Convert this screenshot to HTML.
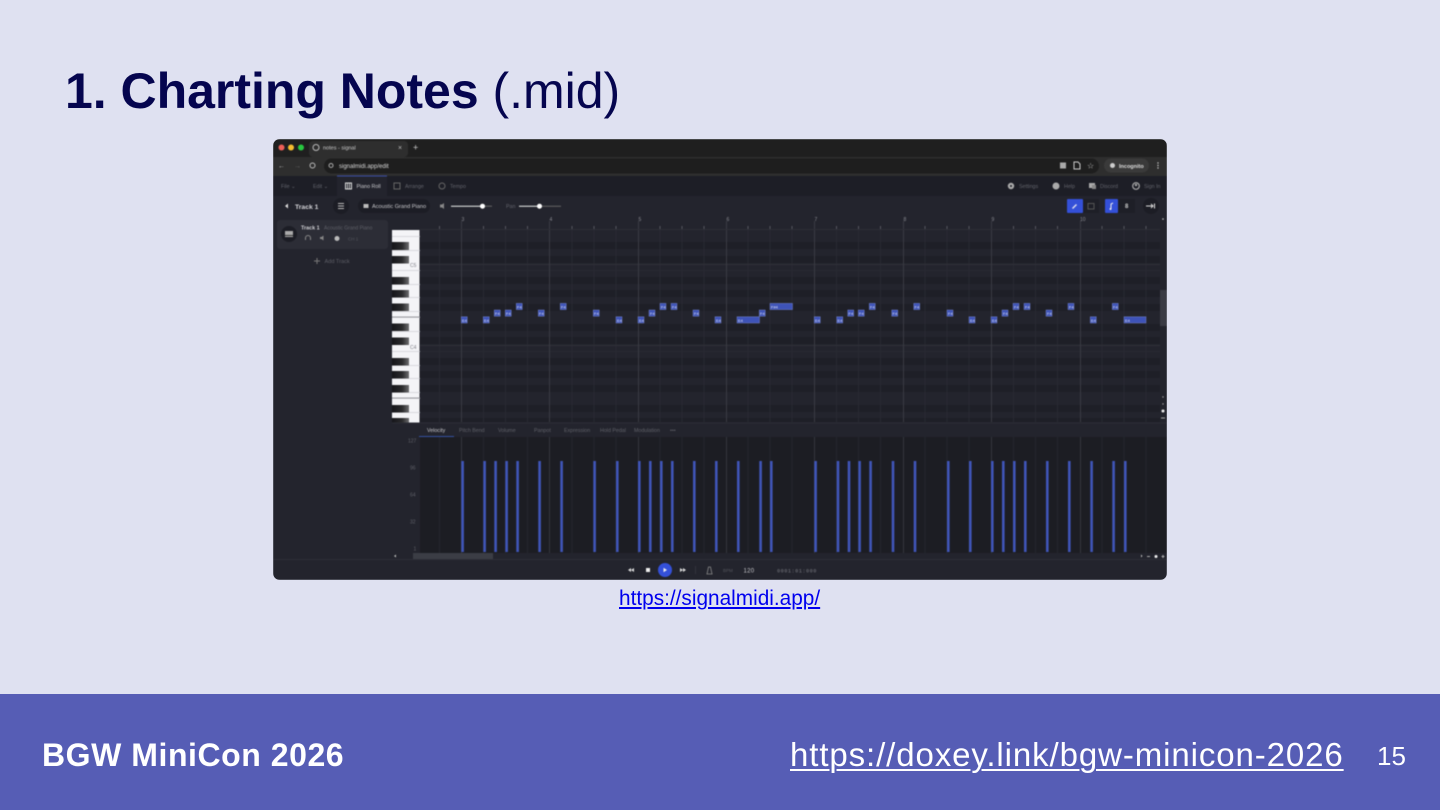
<!DOCTYPE html>
<html><head><meta charset="utf-8"><title>Charting Notes</title>
<style>
html,body{margin:0;padding:0;width:1440px;height:810px;overflow:hidden;background:#dfe1f1;font-family:"Liberation Sans",sans-serif}
.a{position:absolute;white-space:nowrap}
#shot{position:absolute;left:273px;top:139px;width:894px;height:441px;border-radius:7px;overflow:hidden}
#shot svg{display:block;filter:blur(.5px)}
text{font-family:"Liberation Sans",sans-serif}
</style></head><body>
<div class="a" style="left:65px;top:62px;font-size:50px;line-height:58px;color:#05054f;letter-spacing:-.02px"><b>1. Charting Notes</b> (.mid)</div>
<div id="shot">
<svg width="894" height="441" viewBox="273 139 894 441" xmlns="http://www.w3.org/2000/svg">
<rect x="273" y="139" width="894" height="441" fill="#23242d"/>
<!-- tab strip -->
<rect x="273" y="139" width="894" height="18" fill="#1f1f1f"/>
<rect x="309" y="141" width="99" height="16" rx="4" fill="#2e2e2e"/>
<circle cx="281.500" cy="147.500" r="3" fill="#ed5f57"/><circle cx="291" cy="147.500" r="3" fill="#f5bd2f"/><circle cx="301" cy="147.500" r="3" fill="#28c840"/>
<circle cx="316" cy="147.500" r="3" fill="none" stroke="#bbb" stroke-width="1"/>
<text x="323" y="149.500" font-size="5.500" fill="#c8c8c8">notes - signal</text>
<text x="398" y="150" font-size="7" fill="#bbb">×</text>
<text x="413" y="150.500" font-size="9" fill="#ccc">+</text>
<!-- address row -->
<rect x="273" y="157" width="894" height="19" fill="#2e2e2e"/>
<rect x="324" y="158.500" width="775" height="15" rx="7.500" fill="#1e1e1e"/>
<text x="278" y="168" font-size="7" fill="#bbb">←</text><text x="294" y="168" font-size="7" fill="#666">→</text>
<circle cx="312.500" cy="165.500" r="2.500" fill="none" stroke="#bbb" stroke-width="1"/>
<circle cx="331" cy="165.500" r="2" fill="none" stroke="#aaa" stroke-width="1"/>
<text x="339" y="168" font-size="6" fill="#d8d8d8">signalmidi.app/edit</text>
<rect x="1060" y="162.500" width="6" height="6" fill="#aaa"/>
<path d="M1074 162h4l2 2v5h-6z" fill="none" stroke="#ccc"/>
<text x="1087" y="168.500" font-size="8" fill="#ccc">☆</text>
<rect x="1104" y="158.500" width="45" height="14" rx="7" fill="#3a3a3a"/>
<circle cx="1112.500" cy="165.500" r="2.500" fill="#ccc"/>
<text x="1119" y="168" font-size="5.500" font-weight="bold" fill="#ddd">Incognito</text>
<circle cx="1158" cy="163" r=".7" fill="#ccc"/><circle cx="1158" cy="165.500" r=".7" fill="#ccc"/><circle cx="1158" cy="168" r=".7" fill="#ccc"/>
<!-- app header -->
<rect x="273" y="176" width="894" height="20" fill="#1d1e26"/>
<rect x="337" y="176" width="50" height="20" fill="#23242d"/>
<rect x="337" y="175.500" width="50" height="1" fill="#3b4fa5"/>
<g font-size="5.300" fill="#62636b">
<text x="281" y="188">File ⌄</text><text x="313" y="188">Edit ⌄</text>
<text x="405" y="188">Arrange</text><text x="450" y="188">Tempo</text>
<text x="1019" y="188">Settings</text><text x="1064" y="188">Help</text><text x="1100" y="188">Discord</text><text x="1144" y="188">Sign In</text></g>
<text x="356.500" y="188" font-size="5.300" fill="#c8c8cc">Piano Roll</text>
<rect x="345.500" y="183" width="6" height="6" fill="none" stroke="#ddd" stroke-width="1"/><path d="M347.500 183v6M349.500 183v6" stroke="#ddd" stroke-width=".8"/>
<rect x="394" y="183" width="6" height="6" fill="none" stroke="#666"/>
<circle cx="442" cy="186" r="3" fill="none" stroke="#666"/>
<circle cx="1011" cy="186" r="3.200" fill="#aaa"/><circle cx="1011" cy="186" r="1" fill="#1d1e26"/>
<circle cx="1056" cy="186" r="3.500" fill="#aaa"/>
<rect x="1089" y="183" width="6" height="5" fill="#aaa"/><rect x="1092" y="185" width="4" height="4" fill="#888"/>
<circle cx="1136" cy="186" r="3.300" fill="none" stroke="#aaa" stroke-width="1.200"/><circle cx="1136" cy="185" r="1.200" fill="#aaa"/>
<!-- toolbar -->
<path d="M288 203.500v5l-3-2.500z" fill="#ddd"/>
<text x="295" y="209" font-size="6.800" font-weight="bold" fill="#d6d6da">Track 1</text>
<circle cx="341" cy="206" r="8" fill="#1c1d25"/>
<path d="M338 203.500h6M338 206h6M338 208.500h6" stroke="#bbb" stroke-width="1"/>
<rect x="358" y="199" width="72" height="14" rx="7" fill="#1c1d25"/>
<rect x="363.500" y="204" width="5" height="4" fill="#bbb"/>
<text x="372" y="208" font-size="5.600" fill="#c8c8cc">Acoustic Grand Piano</text>
<path d="M440 204.500h2l2-1.500v6l-2-1.500h-2z" fill="#888"/>
<path d="M451 206.200h31" stroke="#eee" stroke-width="1"/><path d="M482 206.200h10" stroke="#666" stroke-width="1"/><circle cx="482.500" cy="206.200" r="2.500" fill="#fff"/>
<text x="506" y="208" font-size="5.300" fill="#62636b">Pan</text>
<path d="M519 206.200h21" stroke="#eee" stroke-width="1"/><path d="M540 206.200h21" stroke="#666" stroke-width="1"/><circle cx="539.500" cy="206.200" r="2.500" fill="#fff"/>
<rect x="1067" y="199" width="16" height="14" rx="1" fill="#3450d8"/>
<path d="M1072.500 208.500l4-4" stroke="#dde" stroke-width="1.500"/>
<rect x="1083" y="199" width="16" height="14" fill="#1e1f27"/><rect x="1088" y="203.500" width="6" height="5.500" fill="none" stroke="#555" stroke-width="1"/>
<rect x="1105" y="199" width="13" height="14" rx="1" fill="#3450d8"/>
<path d="M1111 209v-5l2-1" stroke="#eee" stroke-width="1" fill="none"/><circle cx="1110.500" cy="209" r="1" fill="#eee"/>
<rect x="1118" y="199" width="17" height="14" fill="#1e1f27"/>
<text x="1125" y="208" font-size="6" font-weight="bold" fill="#ccc">8</text>
<circle cx="1151" cy="206" r="8" fill="#1c1d25"/>
<path d="M1146 206h7M1151 204l2 2-2 2M1154.500 203.500v5" stroke="#ddd" stroke-width="1" fill="none"/>
<!-- sidebar -->
<rect x="273" y="219" width="119" height="361" fill="#23242d"/>
<rect x="277" y="220" width="111" height="29" rx="3" fill="#2c2d36"/>
<circle cx="289" cy="234" r="8" fill="#1c1d25"/>
<rect x="285" y="231" width="8" height="6" fill="#aaa"/><rect x="285" y="235" width="8" height="1" fill="#333"/>
<text x="301" y="229.500" font-size="5.400" font-weight="bold" fill="#cfcfd3">Track 1</text>
<text x="324" y="229.500" font-size="5" fill="#5e5f67">Acoustic Grand Piano</text>
<path d="M305.500 240v-2a2.500 2.500 0 0 1 5 0v2" stroke="#888" fill="none"/>
<path d="M320 237h1.500l2-1.500v5l-2-1.500H320z" fill="#888"/>
<circle cx="337" cy="238.500" r="2.500" fill="#bbb"/>
<text x="348" y="240.500" font-size="4.500" fill="#55565e">CH 1</text>
<path d="M314 261h6M317 258v6" stroke="#777" stroke-width="1"/>
<text x="324.500" y="263" font-size="5.600" fill="#5e5f67">Add Track</text>
<!-- grid -->
<rect x="392" y="215" width="775" height="208" fill="#23242d"/>
<g fill="#1e1f27">
<rect x="420" y="242" width="740" height="7"/><rect x="420" y="256" width="740" height="7"/><rect x="420" y="277" width="740" height="7"/><rect x="420" y="290" width="740" height="7"/><rect x="420" y="304" width="740" height="7"/><rect x="420" y="324" width="740" height="7"/><rect x="420" y="337" width="740" height="7"/><rect x="420" y="358" width="740" height="7"/><rect x="420" y="371" width="740" height="7"/><rect x="420" y="385" width="740" height="7"/><rect x="420" y="405" width="740" height="7"/><rect x="420" y="418" width="740" height="4"/>
</g>
<g stroke="#282932" stroke-width="1">
<path d="M420 270.500h740M420 351.500h740"/>
<path d="M439.500 230v192M483.500 230v192M505.500 230v192M527.500 230v192M572 230v192M594 230v192M616 230v192M660 230v192M682 230v192M704 230v192M748 230v192M770 230v192M792 230v192M836.500 230v192M858.500 230v192M880.500 230v192M925 230v192M947 230v192M969 230v192M1013.500 230v192M1035.500 230v192M1057.500 230v192M1102 230v192M1124 230v192M1146 230v192"/></g>
<path d="M439.500 226v3M483.500 226v3M505.500 226v3M527.500 226v3M572 226v3M594 226v3M616 226v3M660 226v3M682 226v3M704 226v3M748 226v3M770 226v3M792 226v3M836.500 226v3M858.500 226v3M880.500 226v3M925 226v3M947 226v3M969 226v3M1013.500 226v3M1035.500 226v3M1057.500 226v3M1102 226v3M1124 226v3M1146 226v3" stroke="#55565e"/>
<path d="M420 345.500h740M420 264.500h740" stroke="#2f3038"/>
<g stroke="#3a3b43" stroke-width="1">
<path d="M461.500 221v201M549.500 221v201M638.500 221v201M726.500 221v201M814.500 221v201M903.500 221v201M991.500 221v201M1080.500 221v201"/></g>
<path d="M420 229.500h740" stroke="#2d2e36"/>
<g font-size="5" fill="#8b8c93"><text x="461.500" y="221">3</text><text x="549.500" y="221">4</text><text x="638.500" y="221">5</text><text x="726.500" y="221">6</text><text x="814.500" y="221">7</text><text x="903.500" y="221">8</text><text x="991.500" y="221">9</text><text x="1080" y="221">10</text></g>
<!-- piano -->
<rect x="392" y="230" width="27.500" height="193" fill="#f4f4f7"/>
<path d="M392 236.500h28M392 250.500h28M392 270.500h28M392 284.500h28M392 297.500h28M392 311.500h28M392 317.500h28M392 331.500h28M392 351.500h28M392 365.500h28M392 378.500h28M392 392.500h28M392 398.500h28M392 412.500h28" stroke="#cfd0d6" stroke-width=".8"/>
<defs><linearGradient id="k" x1="0" x2="1" y1="0" y2="0"><stop offset="0" stop-color="#16161a"/><stop offset=".6" stop-color="#2a2a2c"/><stop offset="1" stop-color="#6d6d70"/></linearGradient></defs>
<g fill="url(#k)">
<rect x="392" y="242" width="17" height="8"/><rect x="392" y="256" width="17" height="7.500"/><rect x="392" y="277" width="17" height="7.500"/><rect x="392" y="290" width="17" height="7.500"/><rect x="392" y="303.500" width="17" height="7.500"/><rect x="392" y="323.500" width="17" height="7.500"/><rect x="392" y="337.500" width="17" height="7.500"/><rect x="392" y="358" width="17" height="7.500"/><rect x="392" y="371" width="17" height="7.500"/><rect x="392" y="385" width="17" height="7.500"/><rect x="392" y="405" width="17" height="7.500"/><rect x="392" y="418" width="17" height="5"/></g>
<path d="M392 317h28M392 398h28" stroke="#9a9aa0" stroke-width="1"/>
<text x="410" y="267" font-size="5" fill="#7d7e85">C5</text><text x="410" y="349" font-size="5" fill="#7d7e85">C4</text>
<!-- notes -->
<g fill="#3e53b8" stroke="#7f8fd8" stroke-width=".4">
<rect x="461.300" y="316.800" width="6" height="6.200"/><rect x="483.300" y="316.800" width="6" height="6.200"/><rect x="494.300" y="310" width="6" height="6.200"/><rect x="505.300" y="310" width="6" height="6.200"/><rect x="516.300" y="303.400" width="6" height="6.200"/><rect x="538.300" y="310" width="6" height="6.200"/><rect x="560.300" y="303.400" width="6" height="6.200"/><rect x="593.300" y="310" width="6" height="6.200"/><rect x="616" y="316.800" width="6" height="6.200"/><rect x="638" y="316.800" width="6" height="6.200"/><rect x="649" y="310" width="6" height="6.200"/><rect x="660" y="303.400" width="6" height="6.200"/><rect x="671" y="303.400" width="6" height="6.200"/><rect x="693" y="310" width="6" height="6.200"/><rect x="715" y="316.800" width="6" height="6.200"/><rect x="737" y="316.800" width="22.500" height="6.200"/><rect x="759.300" y="310" width="6" height="6.200"/><rect x="770" y="303.400" width="22.500" height="6.200"/><rect x="814.300" y="316.800" width="6" height="6.200"/><rect x="836.700" y="316.800" width="6" height="6.200"/><rect x="847.700" y="310" width="6" height="6.200"/><rect x="858.300" y="310" width="6" height="6.200"/><rect x="869.300" y="303.400" width="6" height="6.200"/><rect x="891.700" y="310" width="6" height="6.200"/><rect x="913.700" y="303.400" width="6" height="6.200"/><rect x="947" y="310" width="6" height="6.200"/><rect x="969" y="316.800" width="6" height="6.200"/><rect x="991" y="316.800" width="6" height="6.200"/><rect x="1002" y="310" width="6" height="6.200"/><rect x="1013" y="303.400" width="6" height="6.200"/><rect x="1024" y="303.400" width="6" height="6.200"/><rect x="1046" y="310" width="6" height="6.200"/><rect x="1068" y="303.400" width="6" height="6.200"/><rect x="1090.300" y="316.800" width="6" height="6.200"/><rect x="1112.300" y="303.400" width="6" height="6.200"/><rect x="1124" y="316.800" width="22" height="6.200"/>
</g>
<g font-size="4" fill="#dfe3f6">
<text x="462" y="321.800">E4</text><text x="484" y="321.800">E4</text><text x="495" y="315">F4</text><text x="506" y="315">F4</text><text x="517" y="308.500">F4</text><text x="539" y="315">F4</text><text x="561" y="308.500">F4</text><text x="594" y="315">F4</text><text x="617" y="321.800">E4</text><text x="639" y="321.800">E4</text><text x="650" y="315">F4</text><text x="661" y="308.500">F4</text><text x="672" y="308.500">F4</text><text x="694" y="315">F4</text><text x="716" y="321.800">E4</text><text x="738" y="321.800">E4</text><text x="760" y="315">F4</text><text x="771" y="308.500">F#4</text><text x="815" y="321.800">E4</text><text x="837.500" y="321.800">E4</text><text x="848.500" y="315">F4</text><text x="859" y="315">F4</text><text x="870" y="308.500">F4</text><text x="892.500" y="315">F4</text><text x="914.500" y="308.500">F4</text><text x="948" y="315">F4</text><text x="970" y="321.800">E4</text><text x="992" y="321.800">E4</text><text x="1003" y="315">F4</text><text x="1014" y="308.500">F4</text><text x="1025" y="308.500">F4</text><text x="1047" y="315">F4</text><text x="1069" y="308.500">F4</text><text x="1091" y="321.800">E4</text><text x="1113" y="308.500">F4</text><text x="1125" y="321.800">E4</text>
</g>
<!-- right scroll -->
<rect x="1160" y="290" width="7" height="36" fill="#3a3b44"/>
<circle cx="1163" cy="219" r=".8" fill="#ccc"/>
<circle cx="1163" cy="397" r=".7" fill="#aaa"/><circle cx="1163" cy="404" r=".7" fill="#aaa"/><circle cx="1163" cy="411" r="1.500" fill="#eee"/><path d="M1161 418h4" stroke="#aaa"/>
<!-- lower panel -->
<rect x="392" y="423" width="775" height="14" fill="#23242d"/>
<path d="M392 423h775" stroke="#2b2c35"/>
<path d="M419 436.500h35" stroke="#3450a0"/>
<g font-size="5.300" fill="#5f6068"><text x="459" y="431.800">Pitch Bend</text><text x="498" y="431.800">Volume</text><text x="534" y="431.800">Panpot</text><text x="564" y="431.800">Expression</text><text x="600" y="431.800">Hold Pedal</text><text x="634" y="431.800">Modulation</text><text x="670" y="431.800">•••</text></g>
<text x="427" y="431.800" font-size="5.300" fill="#c8c8cc">Velocity</text>
<rect x="392" y="437" width="28" height="116" fill="#23242d"/>
<rect x="420" y="437" width="747" height="116" fill="#1c1d23"/>
<g font-size="5" fill="#5f6068"><text x="408" y="442.500">127</text><text x="410" y="469.500">96</text><text x="410" y="496.500">64</text><text x="410" y="523.500">32</text><text x="413.500" y="550.500">1</text></g>
<g stroke="#25262e" stroke-width="1"><path d="M439.500 437v116M483.500 437v116M505.500 437v116M527.500 437v116M572 437v116M594 437v116M616 437v116M660 437v116M682 437v116M704 437v116M748 437v116M770 437v116M792 437v116M836.500 437v116M858.500 437v116M880.500 437v116M925 437v116M947 437v116M969 437v116M1013.500 437v116M1035.500 437v116M1057.500 437v116M1102 437v116M1124 437v116M1146 437v116"/></g>
<g stroke="#34353d" stroke-width="1"><path d="M461.500 437v116M549.500 437v116M638.500 437v116M726.500 437v116M814.500 437v116M903.500 437v116M991.500 437v116M1080.500 437v116"/></g>
<g fill="#3f55b8">
<rect x="461.300" y="461" width="2.600" height="91"/><rect x="483.300" y="461" width="2.600" height="91"/><rect x="494.300" y="461" width="2.600" height="91"/><rect x="505.300" y="461" width="2.600" height="91"/><rect x="516.300" y="461" width="2.600" height="91"/><rect x="538.300" y="461" width="2.600" height="91"/><rect x="560.300" y="461" width="2.600" height="91"/><rect x="593.300" y="461" width="2.600" height="91"/><rect x="616" y="461" width="2.600" height="91"/><rect x="638" y="461" width="2.600" height="91"/><rect x="649" y="461" width="2.600" height="91"/><rect x="660" y="461" width="2.600" height="91"/><rect x="671" y="461" width="2.600" height="91"/><rect x="693" y="461" width="2.600" height="91"/><rect x="715" y="461" width="2.600" height="91"/><rect x="737" y="461" width="2.600" height="91"/><rect x="759.300" y="461" width="2.600" height="91"/><rect x="770" y="461" width="2.600" height="91"/><rect x="814.300" y="461" width="2.600" height="91"/><rect x="836.700" y="461" width="2.600" height="91"/><rect x="847.700" y="461" width="2.600" height="91"/><rect x="858.300" y="461" width="2.600" height="91"/><rect x="869.300" y="461" width="2.600" height="91"/><rect x="891.700" y="461" width="2.600" height="91"/><rect x="913.700" y="461" width="2.600" height="91"/><rect x="947" y="461" width="2.600" height="91"/><rect x="969" y="461" width="2.600" height="91"/><rect x="991" y="461" width="2.600" height="91"/><rect x="1002" y="461" width="2.600" height="91"/><rect x="1013" y="461" width="2.600" height="91"/><rect x="1024" y="461" width="2.600" height="91"/><rect x="1046" y="461" width="2.600" height="91"/><rect x="1068" y="461" width="2.600" height="91"/><rect x="1090.300" y="461" width="2.600" height="91"/><rect x="1112.300" y="461" width="2.600" height="91"/><rect x="1124" y="461" width="2.600" height="91"/>
</g>
<!-- h scroll -->
<rect x="392" y="553" width="775" height="6.500" fill="#23242d"/>
<rect x="413" y="553" width="80" height="6.500" fill="#3b3d45"/>
<path d="M396 554.500v3l-2-1.500z" fill="#bbb"/>
<path d="M1141 554.500v3l1.500-1.500z" fill="#bbb"/><path d="M1147 556.500h3" stroke="#aaa"/><circle cx="1156" cy="556.500" r="1.500" fill="#eee"/><path d="M1161.500 556.500h3M1163 555v3" stroke="#aaa"/>
<!-- transport -->
<path d="M273 559.500h894" stroke="#2d2e37"/>
<rect x="273" y="560" width="894" height="20" fill="#23242d"/>
<path d="M631 568v4l-3-2zM634 568v4l-3-2z" fill="#ddd"/>
<rect x="646" y="568" width="4" height="4" fill="#eee"/>
<circle cx="665" cy="570" r="7" fill="#3450d8"/><path d="M663.500 567.800v4.400l3.500-2.200z" fill="#eee"/>
<path d="M680 568v4l3-2zM683 568v4l3-2z" fill="#ddd"/>
<path d="M695.500 566v8" stroke="#33343c"/>
<path d="M707 574l1.500-7h2l1.500 7zM706.500 574h6" fill="none" stroke="#888" stroke-width=".8"/>
<text x="723" y="572" font-size="4.500" fill="#55565e">BPM</text>
<text x="743.500" y="572.500" font-size="6" fill="#c8c8cc" letter-spacing=".3">120</text>
<text x="777" y="572.500" font-size="5.300" font-weight="bold" fill="#5e5f67" letter-spacing=".45" style="font-family:'Liberation Mono',monospace">0001:01:000</text>
</svg>
</div>
<a class="a" href="#" style="left:619px;top:587px;font-size:20.800px;line-height:24px;color:#0000ee;text-decoration:underline">https://signalmidi.app/</a>
<div class="a" style="left:0;top:694px;width:1440px;height:116px;background:#565db5"></div>
<div class="a" style="left:42px;top:737px;font-size:32px;line-height:36px;font-weight:bold;color:#fff;letter-spacing:.55px">BGW MiniCon 2026</div>
<div class="a" style="left:790px;top:736px;font-size:33px;line-height:38px;color:#fff;text-decoration:underline;text-underline-offset:3px;text-decoration-thickness:2px;letter-spacing:.9px">https://doxey.link/bgw-minicon-2026</div>
<div class="a" style="left:1377px;top:740px;font-size:26px;line-height:32px;color:#fff">15</div>
</body></html>
